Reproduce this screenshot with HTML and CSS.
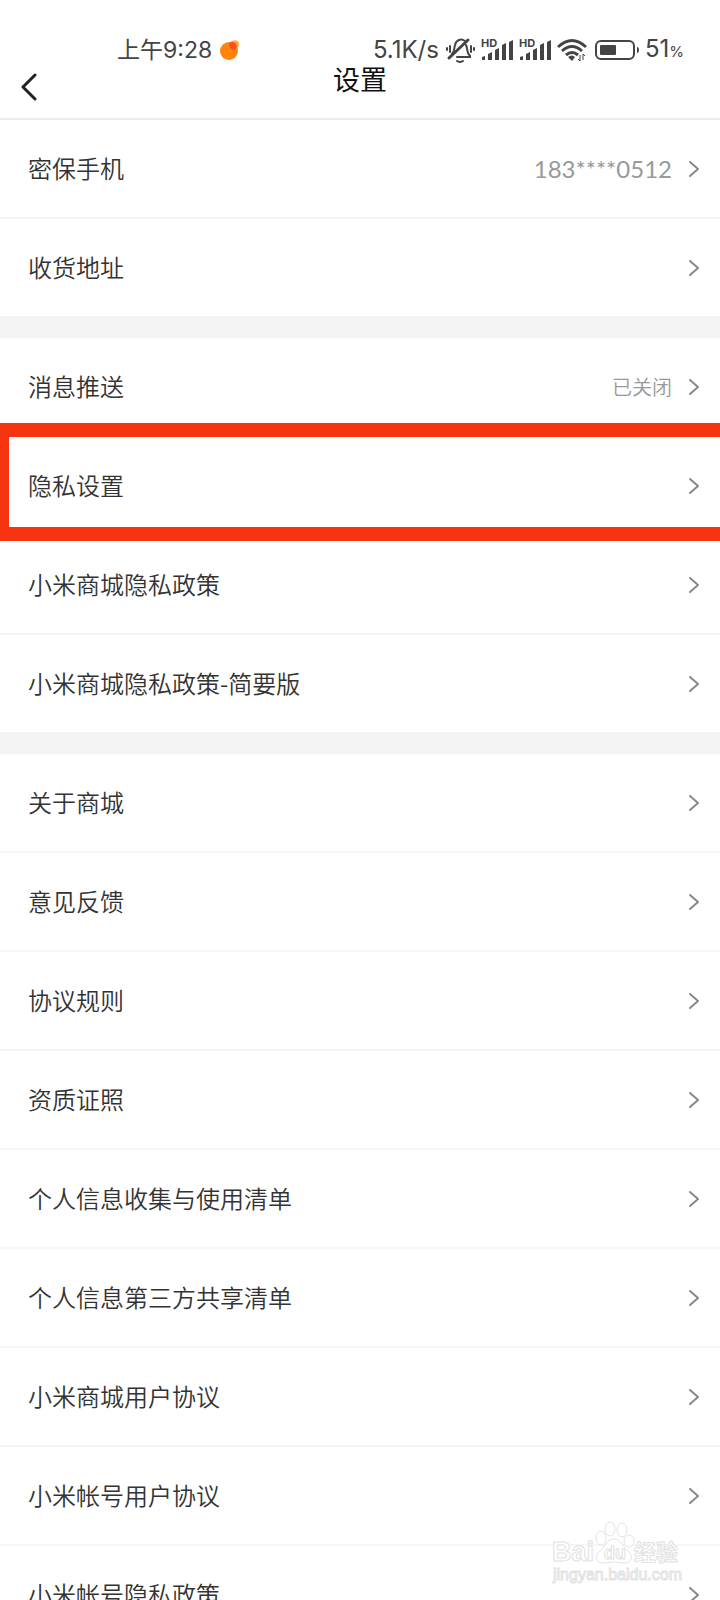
FILE: index.html
```html
<!DOCTYPE html>
<html lang="zh-CN">
<head>
<meta charset="utf-8">
<meta name="viewport" content="width=device-width, initial-scale=1">
<title>设置</title>
<link rel="stylesheet" href="styles.css">
</head>
<body>
<svg width="0" height="0" class="defs" aria-hidden="true">
  <symbol id="chev" viewBox="0 0 12 18"><path d="M2 2l8 7-8 7" fill="none" stroke="currentColor" stroke-width="2" stroke-linecap="round" stroke-linejoin="round"/></symbol>
  <symbol id="signal" viewBox="0 0 32 24"><path d="M1 19l3-1v4H1zM7 16l4-2v8H7zM14 12l4-2v12h-4zM21 7l4-2v17h-4zM28 4l4-2v20h-4z" fill="currentColor"/></symbol>
</svg>
<div class="app">
  <header class="header">
    <div class="status">
      <div class="status-side time">
        <span>上午9:28</span>
        <svg width="20" height="20" viewBox="0 0 20 20"><path d="M10 2c3-2 6-2 8-1 2 3 1 6-2 9z" fill="#ffb43c"/><circle cx="9" cy="11" r="9" fill="#ff8508"/><path d="M9 3c4-2 7-1 8 3-1 3-2 4-4 4s-4-3-4-7z" fill="#fb4f27"/></svg>
      </div>
      <div class="status-side">
        <span>5.1K/s</span>
        <svg width="30" height="26" viewBox="0 0 30 26" fill="none" stroke="currentColor" stroke-width="2" stroke-linecap="round"><path d="M7 17c3-3 2-6 3-9 1-5 6-7 10-4M21 8c2 4 0 7 4 11v1H12"/><path d="M4 21L23 3" stroke-width="3"/><path d="M12 24q3 2 6 0"/><path d="M5 9v6M2 11v2M26 9v6M29 11v2"/></svg>
        <svg class="signal" width="32" height="24"><use href="#signal"/><text x="0" y="9" class="hd">HD</text></svg>
        <svg class="signal" width="32" height="24"><use href="#signal"/><text x="0" y="9" class="hd">HD</text></svg>
        <svg class="wifi" width="30" height="24" viewBox="0 0 30 24" fill="none" stroke="currentColor" stroke-width="3"><path d="M1 9q14-13 28 0M5 13q10-9 20 0M9 17q6-5 12 0"/><path d="M11 19q4-3 7 0l-3 4z" fill="currentColor" stroke="none"/><path d="M23 17v6l-2-2M26 22v-6l2 2" stroke-width="1"/></svg>
        <svg width="44" height="20" viewBox="0 0 44 20"><rect x="1" y="1" width="38" height="18" rx="5" fill="none" stroke="currentColor" stroke-width="2"/><rect x="5" y="5" width="16" height="10" rx="1" fill="currentColor"/><path d="M42 7q2 0 2 3t-2 3z" fill="currentColor"/></svg>
        <span>51<small>%</small></span>
      </div>
    </div>
    <div class="nav">
      <button class="back" type="button" aria-label="返回"><svg width="18" height="28" viewBox="0 0 18 28"><path d="M15 2L3 14l12 12" fill="none" stroke="currentColor" stroke-width="3" stroke-linecap="round" stroke-linejoin="round"/></svg></button>
      <h1>设置</h1>
    </div>
  </header>
  <main class="list">
    <section class="group">
      <a class="row" href="#"><span class="label">密保手机</span><span class="value phone">183****0512</span><svg class="chev"><use href="#chev"/></svg></a>
      <a class="row" href="#"><span class="label">收货地址</span><svg class="chev"><use href="#chev"/></svg></a>
    </section>
    <section class="group">
      <a class="row" href="#"><span class="label">消息推送</span><span class="value">已关闭</span><svg class="chev"><use href="#chev"/></svg></a>
      <a class="row marked" href="#"><span class="label">隐私设置</span><svg class="chev"><use href="#chev"/></svg></a>
      <a class="row" href="#"><span class="label">小米商城隐私政策</span><svg class="chev"><use href="#chev"/></svg></a>
      <a class="row" href="#"><span class="label">小米商城隐私政策-简要版</span><svg class="chev"><use href="#chev"/></svg></a>
    </section>
    <section class="group">
      <a class="row" href="#"><span class="label">关于商城</span><svg class="chev"><use href="#chev"/></svg></a>
      <a class="row" href="#"><span class="label">意见反馈</span><svg class="chev"><use href="#chev"/></svg></a>
      <a class="row" href="#"><span class="label">协议规则</span><svg class="chev"><use href="#chev"/></svg></a>
      <a class="row" href="#"><span class="label">资质证照</span><svg class="chev"><use href="#chev"/></svg></a>
      <a class="row" href="#"><span class="label">个人信息收集与使用清单</span><svg class="chev"><use href="#chev"/></svg></a>
      <a class="row" href="#"><span class="label">个人信息第三方共享清单</span><svg class="chev"><use href="#chev"/></svg></a>
      <a class="row" href="#"><span class="label">小米商城用户协议</span><svg class="chev"><use href="#chev"/></svg></a>
      <a class="row" href="#"><span class="label">小米帐号用户协议</span><svg class="chev"><use href="#chev"/></svg></a>
      <a class="row" href="#"><span class="label">小米帐号隐私政策</span><svg class="chev"><use href="#chev"/></svg></a>
    </section>
  </main>
  <svg class="watermark" width="130" height="64" viewBox="0 0 130 64">
    <g fill="#fff" stroke="#e2e2e2">
      <text x="0" y="40" class="wm-brand">Bai</text>
      <text x="82" y="39" class="wm-cjk">经验</text>
      <path d="M62 18c-8 0-9 9-15 13-4 4-3 11 4 11 5 0 7-1 11-1s6 1 11 1c7 0 8-7 4-11-6-4-7-13-15-13z"/>
      <ellipse cx="49" cy="17" rx="5" ry="7"/><ellipse cx="58" cy="8" rx="5" ry="7"/><ellipse cx="70" cy="9" rx="5" ry="7"/><ellipse cx="77" cy="20" rx="5" ry="6"/>
      <text x="52" y="38" class="wm-du">du</text>
      <text x="1" y="59" class="wm-url">jingyan.baidu.com</text>
    </g>
  </svg>
</div>
</body>
</html>
```

FILE: styles.css
```css
* { box-sizing: border-box; }

body {
  margin: 0;
  background: #fff;
  color: #333;
  font-family: "Noto Sans CJK SC", sans-serif;
  font-size: 24px;
}

.defs { position: absolute; }

.app {
  position: relative;
  display: flex;
  flex-direction: column;
  height: 100vh;
  overflow: hidden;
}

.header {
  flex: none;
  padding-top: 36px;
  border-bottom: 2px solid #ebebeb;
}

.status {
  display: flex;
  justify-content: space-between;
  height: 28px;
  padding: 0 36px 0 117px;
  color: #444;
  font-family: Inter, "Noto Sans CJK SC", sans-serif;
  font-size: 24px;
  line-height: 28px;
}

.status-side {
  display: flex;
  align-items: center;
  gap: 6px;
}

.time {
  gap: 8px;
  font-size: 23px;
}

.status svg { flex: none; }
.status small { font-size: 15px; }
.signal { overflow: visible; }
.wifi { margin-right: 2px; }
.hd { font: 700 11px Inter, sans-serif; fill: currentColor; }

.nav {
  display: grid;
  grid-template-columns: 1fr auto 1fr;
  align-items: start;
  height: 54px;
}

.back {
  display: flex;
  align-items: center;
  justify-self: start;
  height: 46px;
  padding: 0 20px;
  border: 0;
  background: none;
  color: #222;
}

h1 {
  margin: 0;
  color: #111;
  font-size: 27px;
  font-weight: 400;
  line-height: 30px;
}

.list {
  flex: 1;
  min-height: 0;
  overflow-y: auto;
  scrollbar-width: none;
}

.group + .group { border-top: 22px solid #f4f4f4; }

.row {
  display: flex;
  align-items: center;
  gap: 16px;
  height: 97px;
  padding: 0 20px 0 28px;
  color: inherit;
  text-decoration: none;
}

.row:not(:last-child) {
  height: 99px;
  border-bottom: 2px solid #f6f6f6;
}

.label {
  padding-bottom: 3px;
  font-weight: 350;
}

.row .chev {
  flex: none;
  width: 12px;
  height: 18px;
  margin-left: auto;
  color: #888;
}

.value {
  margin-left: auto;
  color: #999;
  font-size: 20px;
  font-weight: 350;
}

.value + .chev { margin-left: 0; }
.phone { font-family: Lato, sans-serif; font-size: 24px; font-weight: 400; }

.marked { position: relative; }

.marked::after {
  content: "";
  position: absolute;
  inset: -14px 0 -7px;
  border: 14px solid #f73410;
  border-left-width: 9px;
  border-right: 0;
  pointer-events: none;
}

.watermark {
  position: absolute;
  right: 38px;
  bottom: 15px;
  pointer-events: none;
}

.wm-brand { font: 700 27px "Liberation Sans", sans-serif; }
.wm-cjk { font: 700 22px "Noto Sans CJK SC", sans-serif; }
.wm-du { font: 700 18px "Liberation Sans", sans-serif; }
.wm-url { font: 400 16px "Liberation Sans", sans-serif; }
```
